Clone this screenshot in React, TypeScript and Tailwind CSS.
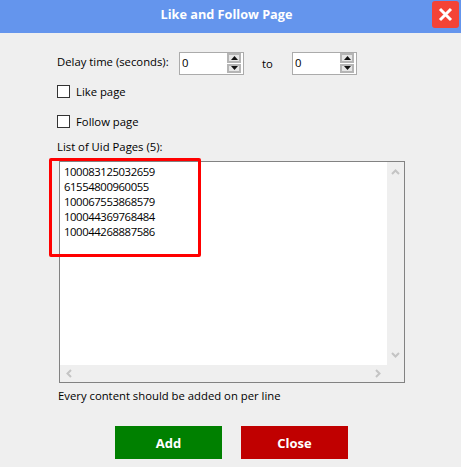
const UIDS = ['100083125032659', '61554800960055', '100067553868579', '100044369768484', '100044268887586'];

function SpinBox() {
  return (
    <div className="w-[65px] h-[23px] border border-[#ababab] bg-white flex items-stretch">
      <span className="flex-1 pl-[2px] text-[11.300px] leading-[19px] text-black">0</span>
      <div className="w-[14px] mr-[2px] mb-[1px] flex flex-col gap-px bg-white">
        <div className="flex-1 flex items-center justify-center bg-[#e6e6e6] border-2 border-[#b5b5b5]">
          <svg width="7" height="4" viewBox="0 0 7 4"><path d="M3.5 0L7 4H0z" fill="#111" /></svg>
        </div>
        <div className="flex-1 flex items-center justify-center bg-[#e6e6e6] border-2 border-[#b5b5b5]">
          <svg width="7" height="4" viewBox="0 0 7 4"><path d="M0 0h7L3.500 4z" fill="#111" /></svg>
        </div>
      </div>
    </div>
  );
}

function CheckRow({ label, mb }: { label: string; mb: string }) {
  return (
    <div className={`flex items-center gap-[6px] h-[13px] ${mb}`}>
      <div className="w-[13px] h-[13px] border border-[#333] bg-white" />
      <span className="text-[11.300px] leading-[13px] text-black">{label}</span>
    </div>
  );
}

function Chevron({ d }: { d: string }) {
  return (
    <svg width="9" height="9" viewBox="0 0 9 9">
      <path d={d} fill="none" stroke="#c4c4c4" strokeWidth="2" />
    </svg>
  );
}

export default function App() {
  return (
    <div className="w-[461px] h-[467px] bg-[#efefef] overflow-hidden" style={{ fontFamily: '"Open Sans", "Noto Sans", sans-serif' }}>
      {/* Title bar */}
      <div className="relative h-[33px] bg-[#6495ed] flex items-center justify-center">
        <span className="text-[12.700px] font-bold text-white -mt-[3px] pr-[8px]">Like and Follow Page</span>
        <div className="absolute left-[432px] top-[1px] w-[27px] h-[27px] rounded-[3px] bg-[#f44336] flex items-center justify-center">
          <svg width="15" height="15" viewBox="0 0 15 15">
            <path d="M2 2L13 13M13 2L2 13" stroke="#fff" strokeWidth="3" />
          </svg>
        </div>
      </div>

      <div className="relative pl-[57px] pt-[19px]">
        {/* Delay row */}
        <div className="flex items-start h-[23px] mb-[10px]">
          <span className="w-[122px] text-[11.300px] leading-[19px] text-black">Delay time (seconds):</span>
          <SpinBox />
          <span className="w-[48px] pl-[18px] text-[11.300px] leading-[24px] text-black">to</span>
          <SpinBox />
        </div>

        <CheckRow label="Like page" mb="mb-[17px]" />
        <CheckRow label="Follow page" mb="mb-[11px]" />

        <div className="text-[11.300px] leading-[16px] text-black mb-[6px]">List of Uid Pages (5):</div>

        {/* Textarea */}
        <div className="ml-[2px] w-[346px] h-[222px] border border-[#828282] bg-white flex flex-col">
          <div className="flex-1 flex min-h-0">
            <div className="flex-1 pl-[4px] pt-[2px]">
              {UIDS.map((uid) => (
                <div key={uid} className="text-[11.300px] leading-[15px] tracking-[-0.4px] text-black">{uid}</div>
              ))}
            </div>
            <div className="w-[17px] bg-[#efefef] flex flex-col items-center justify-between py-[6px]">
              <Chevron d="M1 6L4.500 2.500L8 6" />
              <Chevron d="M1 3L4.500 6.500L8 3" />
            </div>
          </div>
          <div className="h-[17px] bg-[#efefef] flex items-center justify-between pl-[5px] pr-[22px]">
            <Chevron d="M6 1L2.500 4.500L6 8" />
            <Chevron d="M3 1L6.500 4.500L3 8" />
          </div>
        </div>

        <div className="ml-[1px] mt-[5px] text-[11.300px] leading-[16px] text-black">Every content should be added on per line</div>

        {/* Buttons */}
        <div className="flex gap-[19px] ml-[58px] mt-[22px]">
          <div className="w-[107px] h-[33px] pt-[2px] bg-[#008000] flex items-center justify-center text-[13px] font-bold text-white">Add</div>
          <div className="w-[107px] h-[33px] pt-[2px] bg-[#c00000] flex items-center justify-center text-[13px] font-bold text-white">Close</div>
        </div>

        {/* Red annotation */}
        <div className="absolute left-[49px] top-[125px] w-[152px] h-[99px] border-[3px] border-[#ff0000] rounded-[2px]" />
      </div>
    </div>
  );
}
